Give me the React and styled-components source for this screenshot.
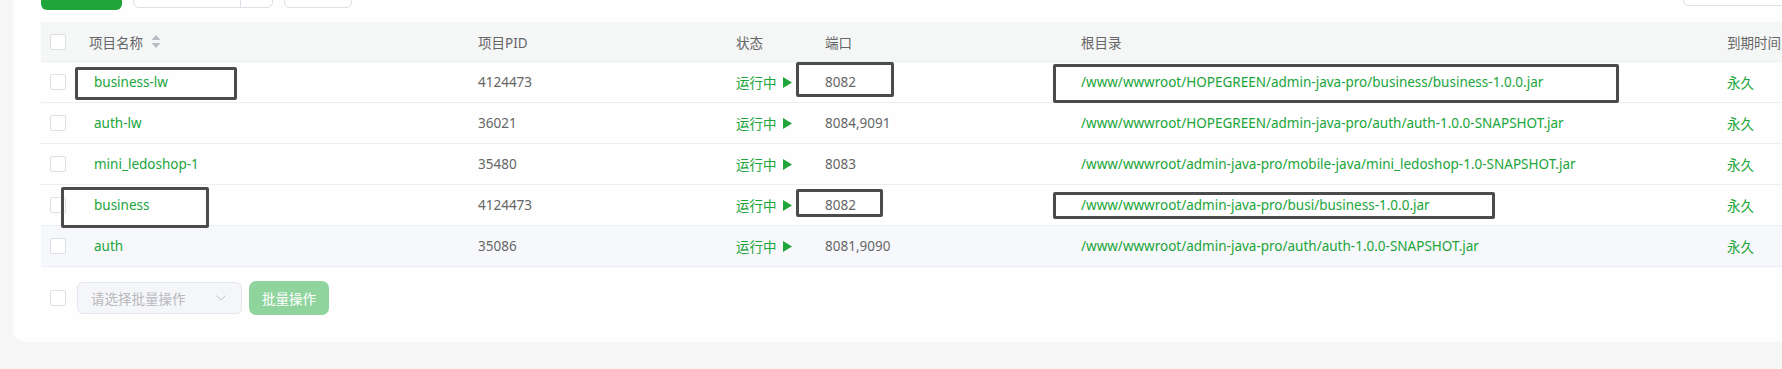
import React from "react";
import styled, { createGlobalStyle } from "styled-components";

const GREEN = "#20a53a";

const GlobalStyle = createGlobalStyle`
  html, body {
    margin: 0;
    padding: 0;
    background: #f5f6f5;
    overflow: hidden;
  }
  body {
    font-family: "Noto Sans", "Noto Sans CJK SC", sans-serif;
    font-size: 13.5px;
    color: #666;
  }
  * { box-sizing: border-box; }
`;

const Page = styled.div`
  width: 1782px;
  height: 369px;
  overflow: hidden;
  padding-left: 13px;
`;

const Card = styled.div`
  width: 1938px;
  margin-top: -40px;
  padding: 16px 28px 27px;
  background: #fdfefd;
  border-radius: 12px;
`;

const Toolbar = styled.div`
  display: flex;
  align-items: flex-start;
  gap: 11px;
  height: 34px;
`;

const PrimaryButton = styled.div`
  width: 81px;
  height: 34px;
  border-radius: 6px;
  background: ${GREEN};
`;

const SplitButton = styled.div`
  display: flex;
  width: 140px;
  height: 32px;
  border: 1px solid #dcdfe6;
  border-radius: 6px;
  background: #fff;
`;

const SplitMain = styled.div`
  width: 107px;
  border-right: 1px solid #dcdfe6;
`;

const PlainButton = styled.div`
  width: 68px;
  height: 32px;
  border: 1px solid #dcdfe6;
  border-radius: 6px;
  background: #fff;
`;

const SearchBox = styled.div`
  margin-left: auto;
  width: 240px;
  height: 30px;
  border: 1px solid #dcdfe6;
  border-radius: 6px;
  background: #fff;
`;

const Table = styled.div`
  margin-top: 12px;
`;

const COLS = "37px 389px 258px 89px 256px 646px 150px 1fr";

const HeaderRow = styled.div`
  display: grid;
  grid-template-columns: ${COLS};
  height: 40px;
  align-items: center;
  background: #f5f6f6;
  border-bottom: 1px solid #ebeef5;
  color: #666;
`;

const Row = styled.div`
  display: grid;
  grid-template-columns: ${COLS};
  height: 41px;
  align-items: center;
  background: ${(p) => (p.$hover ? "#f7f8fb" : "transparent")};
  border-bottom: 1px solid #ebeef5;
`;

const Cell = styled.div`
  position: relative;
  height: 100%;
  display: flex;
  align-items: center;
  padding-left: 11px;
  white-space: nowrap;
  color: ${(p) => (p.$green ? GREEN : "#666")};
`;

const CheckCell = styled.div`
  height: 100%;
  display: flex;
  align-items: center;
  padding-left: 9px;
`;

const Checkbox = styled.span`
  display: inline-block;
  width: 16px;
  height: 16px;
  border: 1px solid #dcdfe6;
  border-radius: 2px;
  background: #fff;
`;

const NameLink = styled.span`
  padding-left: 5px;
  color: ${GREEN};
`;

const SortIcon = styled.svg`
  margin-left: 8px;
`;

const Status = styled.span`
  display: inline-flex;
  align-items: center;
  gap: 6px;
  color: ${GREEN};
`;

const Highlight = styled.span`
  position: absolute;
  left: ${(p) => p.$l}px;
  top: ${(p) => p.$t}px;
  width: ${(p) => p.$w}px;
  height: ${(p) => p.$h}px;
  border: 3px solid #4b4b4b;
  border-radius: 2px;
  z-index: 2;
  pointer-events: none;
`;

const Footer = styled.div`
  display: flex;
  align-items: center;
  height: 34px;
  margin-top: 14px;
  padding-left: 9px;
`;

const Select = styled.div`
  display: flex;
  align-items: center;
  justify-content: space-between;
  width: 165px;
  height: 32px;
  margin-left: 11px;
  padding: 0 15px 0 13px;
  border: 1px solid #e4e6ee;
  border-radius: 6px;
  background: #f5f6fa;
  color: #b8b8bd;
`;

const BatchButton = styled.div`
  display: flex;
  align-items: center;
  justify-content: center;
  width: 80px;
  height: 34px;
  margin-left: 7px;
  border-radius: 7px;
  background: #8fd49d;
  color: #fff;
`;

const rows = [
  {
    name: "business-lw",
    pid: "4124473",
    port: "8082",
    path: "/www/wwwroot/HOPEGREEN/admin-java-pro/business/business-1.0.0.jar",
    boxes: {
      name: { l: -3, t: 5, w: 162, h: 33 },
      port: { l: -18, t: 0, w: 98, h: 35 },
      path: { l: -17, t: 2, w: 566, h: 39 },
    },
  },
  {
    name: "auth-lw",
    pid: "36021",
    port: "8084,9091",
    path: "/www/wwwroot/HOPEGREEN/admin-java-pro/auth/auth-1.0.0-SNAPSHOT.jar",
  },
  {
    name: "mini_ledoshop-1",
    pid: "35480",
    port: "8083",
    path: "/www/wwwroot/admin-java-pro/mobile-java/mini_ledoshop-1.0-SNAPSHOT.jar",
  },
  {
    name: "business",
    pid: "4124473",
    port: "8082",
    path: "/www/wwwroot/admin-java-pro/busi/business-1.0.0.jar",
    boxes: {
      name: { l: -17, t: 2, w: 148, h: 41 },
      port: { l: -18, t: 4, w: 87, h: 28 },
      path: { l: -17, t: 7, w: 442, h: 27 },
    },
  },
  {
    name: "auth",
    pid: "35086",
    port: "8081,9090",
    path: "/www/wwwroot/admin-java-pro/auth/auth-1.0.0-SNAPSHOT.jar",
    hover: true,
  },
];

const Box = ({ b }) =>
  b ? <Highlight $l={b.l} $t={b.t} $w={b.w} $h={b.h} /> : null;

const PlayIcon = () => (
  <svg width="9" height="11" viewBox="0 0 9 11">
    <path d="M0 0 L9 5.5 L0 11 Z" fill={GREEN} />
  </svg>
);

export default function App() {
  return (
    <>
      <GlobalStyle />
      <Page>
        <Card>
          <Toolbar>
            <PrimaryButton />
            <SplitButton>
              <SplitMain />
            </SplitButton>
            <PlainButton />
            <SearchBox />
          </Toolbar>
          <Table>
            <HeaderRow>
              <CheckCell>
                <Checkbox />
              </CheckCell>
              <Cell>
                项目名称
                <SortIcon width="10" height="15" viewBox="0 0 10 15">
                  <path d="M5 1 L9.5 6 L0.5 6 Z" fill="#b9bcc2" />
                  <path d="M5 14 L9.5 9 L0.5 9 Z" fill="#b9bcc2" />
                </SortIcon>
              </Cell>
              <Cell>项目PID</Cell>
              <Cell>状态</Cell>
              <Cell>端口</Cell>
              <Cell>根目录</Cell>
              <Cell>到期时间</Cell>
              <Cell />
            </HeaderRow>
            {rows.map((r) => (
              <Row key={r.name} $hover={r.hover}>
                <CheckCell>
                  <Checkbox />
                </CheckCell>
                <Cell>
                  <NameLink>{r.name}</NameLink>
                  <Box b={r.boxes && r.boxes.name} />
                </Cell>
                <Cell>{r.pid}</Cell>
                <Cell>
                  <Status>
                    运行中
                    <PlayIcon />
                  </Status>
                </Cell>
                <Cell>
                  {r.port}
                  <Box b={r.boxes && r.boxes.port} />
                </Cell>
                <Cell $green>
                  {r.path}
                  <Box b={r.boxes && r.boxes.path} />
                </Cell>
                <Cell $green>永久</Cell>
                <Cell />
              </Row>
            ))}
          </Table>
          <Footer>
            <Checkbox />
            <Select>
              请选择批量操作
              <svg width="10" height="6" viewBox="0 0 10 6">
                <path d="M0.5 0.5 L5 5 L9.5 0.5" fill="none" stroke="#c0c4cc" strokeWidth="1" />
              </svg>
            </Select>
            <BatchButton>批量操作</BatchButton>
          </Footer>
        </Card>
      </Page>
    </>
  );
}
